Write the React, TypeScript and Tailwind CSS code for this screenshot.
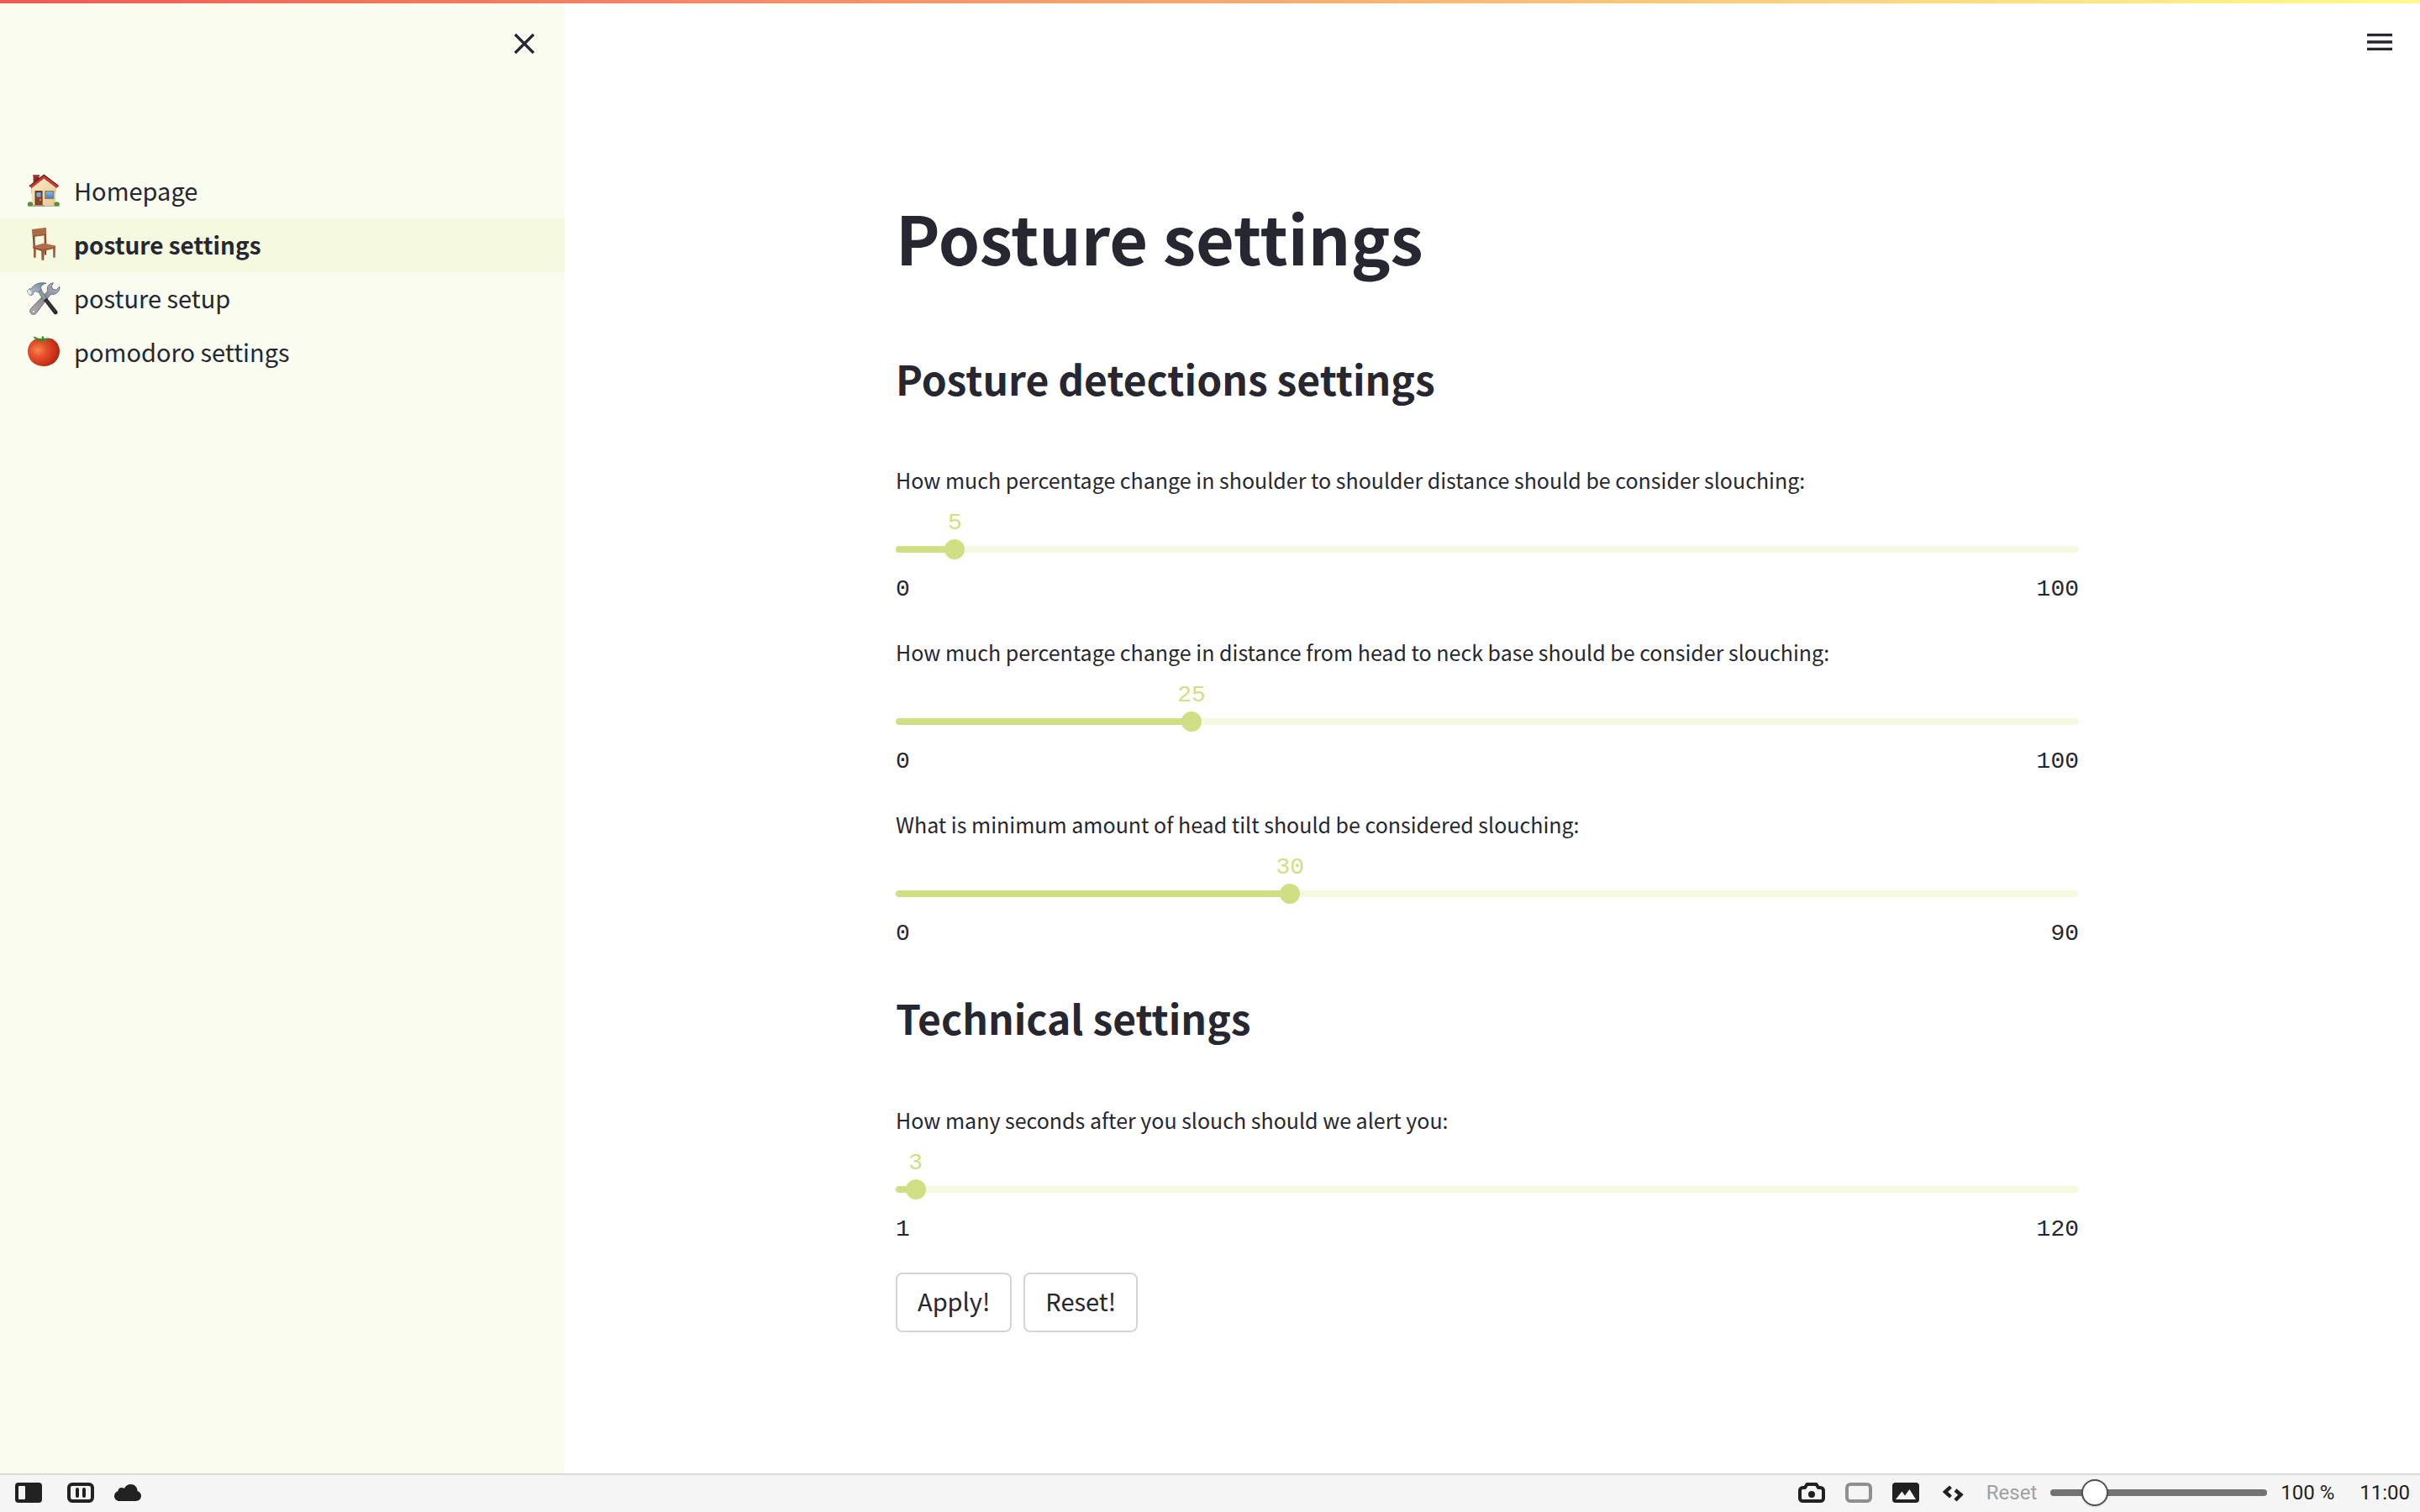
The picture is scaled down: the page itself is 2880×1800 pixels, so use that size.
import { useId, useState, type ReactNode } from "react";

function HouseIcon() {
  return (
    <svg viewBox="0 0 40 40" className="size-10 shrink-0" aria-hidden="true">
      <defs>
        <linearGradient id="wall" x1="0" y1="0" x2="1" y2="1">
          <stop offset="0" stopColor="#fbecc6" />
          <stop offset="1" stopColor="#e3c99a" />
        </linearGradient>
        <linearGradient id="pane" x1="0" y1="0" x2="0" y2="1">
          <stop offset="0" stopColor="#7fb9ee" />
          <stop offset="1" stopColor="#3f86c9" />
        </linearGradient>
      </defs>
      <path d="M7.6 1.4h7V9l-7 6z" fill="#8e2f29" />
      <path d="M7.2 1h7.8v1.8H7.2z" fill="#b2443a" />
      <path d="M5.7 15 20.3 3 34 15v23.6H5.7z" fill="url(#wall)" />
      <path d="M5.7 15v8M34 15v8" stroke="#c9ad7c" strokeWidth="0.8" />
      <path d="M20.3 1.2 37.8 14.4l-1.9 2.4L20.3 5 5 16.8l-2.2-2.2z" fill="#d9332e" />
      <path d="M2.8 14.6 20.3 1.2l17.5 13.2" fill="none" stroke="#3b2222" strokeWidth="1.1" />
      <path d="M5 17 20.3 5.2 35.9 17" fill="none" stroke="#8d1d1a" strokeWidth="0.7" />
      <rect x="9.6" y="20" width="9" height="17.4" fill="#6d3420" />
      <rect x="10.8" y="21.4" width="6.6" height="15.6" fill="#8a4529" />
      <rect x="11.6" y="22.2" width="5" height="5.2" fill="#62b2f2" />
      <circle cx="16" cy="31" r="0.9" fill="#e7b54a" />
      <rect x="21.2" y="20" width="11" height="10" fill="#a1754c" />
      <rect x="22.6" y="21.2" width="8.2" height="7.4" fill="url(#pane)" />
      <path d="M7.6 37.2h13.2v1.6H7.6z" fill="#9a948c" />
      <ellipse cx="4" cy="36" rx="3.2" ry="2.8" fill="#5b8f33" />
      <ellipse cx="35.6" cy="36" rx="3.2" ry="2.8" fill="#5b8f33" />
      <path d="M1 38.2h38v.8H1z" fill="#a9a693" />
    </svg>
  );
}

function ChairIcon() {
  return (
    <svg viewBox="0 0 40 40" className="size-10 shrink-0" aria-hidden="true">
      <path d="M20.8 22h2.6l-.4 10.4h-2.2z" fill="#7f452c" />
      <path d="M6.2 2.2 9 2l1 21H7.6z" fill="#8f4d31" />
      <path d="M20.2.6 22.6.2l.8 19.6h-2.6z" fill="#8f4d31" />
      <path d="M6.2 2.1 22.6.1l.4 8.4L7 10.6z" fill="#a96642" />
      <path d="M7.4 4.4 22.4 2.4M7.6 7.4l15-2" stroke="#b9764f" strokeWidth="0.8" />
      <path d="M7 10.6l16-2.1" stroke="#7a4026" strokeWidth="0.8" />
      <path d="M8 24h2.8l-.2 11.7H8z" fill="#a25d3b" />
      <path d="M17 25.6h3.3l-.2 13.2h-2.6z" fill="#a7613e" />
      <path d="M19.2 25.6h1.1l-.2 13.2h-.9z" fill="#7a4026" />
      <path d="M31 22.4h3l-.3 13.3h-2.4z" fill="#a25d3b" />
      <path d="M7 22.2 20 18.4l14.2 3.2-15.8 3.8z" fill="#b36f49" />
      <path d="M7 22.2l11.4 3.2v2.8L7.4 24.8z" fill="#95522f" />
      <path d="M18.4 25.4l15.8-3.8-.2 2.9-15.6 3.7z" fill="#a25d3b" />
    </svg>
  );
}

function ToolsIcon() {
  return (
    <svg viewBox="0 0 40 40" className="size-10 shrink-0" aria-hidden="true">
      <defs>
        <linearGradient id="steel" x1="0" y1="1" x2="1" y2="0">
          <stop offset="0" stopColor="#b9aeb2" />
          <stop offset="0.5" stopColor="#8d8690" />
          <stop offset="1" stopColor="#a8bccb" />
        </linearGradient>
        <linearGradient id="head" x1="0" y1="1" x2="1" y2="0">
          <stop offset="0" stopColor="#c5d2de" />
          <stop offset="1" stopColor="#6d7f90" />
        </linearGradient>
      </defs>
      <path
        d="M31.6 1.8c-4.4.2-7.6 3.600-7.300 7.700.1 1.300.3 2-.5 3.100L4.600 32.400c-1.700 2.300-.9 5.300 1.300 6.500 2 1 4.200.4 5.500-1.400L27.300 16.600c.9-1.100 1.800-1.300 3.300-1.200 5.200 0 9-4.500 8.300-9.200L35 10.200l-4.500-.9-1.200-4z"
        fill="url(#steel)"
        stroke="#5f6470"
        strokeWidth="0.9"
      />
      <circle cx="7.800" cy="35.800" r="1.700" fill="#fbfdf3" stroke="#5f6470" strokeWidth="0.6" />
      <path d="M13.200 11.600l3.700-2.200 7.400 12.200-3.600 2.500z" fill="#8b98a6" stroke="#586170" strokeWidth="0.7" />
      <path d="M20 22.400l3.800-2.600 12.400 15.600c1.700 2.700-1.700 5.200-4 3z" fill="#26282c" />
      <path d="M23 22.400l10.800 13.800" stroke="#4c5057" strokeWidth="1" />
      <path
        d="M.4 11.200l2.800-2.600 1.800.6C8.300 3.200 14.600.6 23 2.200c-3.600.8-5.800 2.800-6.600 5.400l1 2.200-4.600 3.300-2.200-1.600-3.400 1.600.2 2.200-2.600 1.500c-2-.7-4-3.100-4.400-5.600z"
        fill="url(#head)"
        stroke="#566474"
        strokeWidth="0.8"
      />
      <ellipse cx="3" cy="12.600" rx="1.900" ry="2.800" transform="rotate(-28 3 12.600)" fill="#e3edf5" />
    </svg>
  );
}

function TomatoIcon() {
  return (
    <svg viewBox="0 0 40 40" className="size-10 shrink-0" aria-hidden="true">
      <defs>
        <radialGradient id="skin" cx="0.32" cy="0.42" r="0.75">
          <stop offset="0" stopColor="#f58a4e" />
          <stop offset="0.35" stopColor="#e4502a" />
          <stop offset="0.75" stopColor="#c92f18" />
          <stop offset="1" stopColor="#94200f" />
        </radialGradient>
      </defs>
      <path
        d="M20 4.600c4-1.600 9-1.400 12.600 1.400 4 3 6.400 7.800 6.400 13 0 9.800-8 18-19 18S1 29.400 1 19.600c0-6 2.600-10.600 6.800-13.600C11.400 3.400 16 3.200 20 4.600z"
        fill="url(#skin)"
      />
      <path
        d="M7.600 1.600c2.600.4 5.400 1.600 7.600 3.400 1-.8 2.200-1.200 3-1.200l-.8-2.200 2.200-.4 1 2.800c3-.6 6.600-.5 9.400.6-2.600.3-4.600.6-6.800 1.200l2.400 1.800c-2 0-3.600-.4-5-1l-1.600 2.200-1.800-2.200c-1.800.7-4 1-6.200 1l2-2.200C10 5.400 8.400 3.800 7.600 1.600z"
        fill="#3f8a2a"
      />
    </svg>
  );
}

const pages: { label: string; icon: ReactNode; active?: boolean }[] = [
  { label: "Homepage", icon: <HouseIcon /> },
  { label: "posture settings", icon: <ChairIcon />, active: true },
  { label: "posture setup", icon: <ToolsIcon /> },
  { label: "pomodoro settings", icon: <TomatoIcon /> },
];

function Sidebar() {
  return (
    <aside className="w-[672px] shrink-0 bg-[#fafcf0]">
      <div className="flex h-[196px] justify-end pt-8 pr-7">
        <button type="button" aria-label="Close sidebar" className="size-10">
          <svg viewBox="0 0 40 40" className="size-10" stroke="#262730" strokeWidth="3.200">
            <path d="M9 9l22 22M31 9L9 31" />
          </svg>
        </button>
      </div>
      <nav>
        {pages.map((page) => (
          <a
            key={page.label}
            href="#"
            className={
              page.active
                ? "flex h-16 items-center gap-4 bg-[#f5f9df] px-8 pb-[3px] text-[28px] font-bold"
                : "flex h-16 items-center gap-4 px-8 pb-[3px] text-[29px]"
            }
          >
            {page.icon}
            {page.label}
          </a>
        ))}
      </nav>
    </aside>
  );
}

function SettingSlider({ label, min, max, initial }: { label: string; min: number; max: number; initial: number }) {
  const id = useId();
  const [value, setValue] = useState(initial);
  const percent = `${((value - min) / (max - min)) * 100}%`;
  return (
    <div>
      <label htmlFor={id} className="block text-[25px] leading-10">
        {label}
      </label>
      <div className="relative mt-[51px] h-6">
        <div className="absolute inset-x-0 top-2 h-2 overflow-hidden rounded-full bg-[#f5f9df]">
          <div className="h-full bg-[#d0df83]" style={{ width: percent }} />
        </div>
        <output
          htmlFor={id}
          className="absolute bottom-[27px] -translate-x-1/2 font-['Liberation_Mono',monospace] text-[28px] leading-8 text-[#d0df83]"
          style={{ left: percent }}
        >
          {value}
        </output>
        <input
          id={id}
          type="range"
          min={min}
          max={max}
          value={value}
          onChange={(e) => setValue(Number(e.target.value))}
          className="absolute inset-y-0 -left-3 h-6 w-[calc(100%+24px)] appearance-none bg-transparent [&::-webkit-slider-thumb]:size-6 [&::-webkit-slider-thumb]:appearance-none [&::-webkit-slider-thumb]:rounded-full [&::-webkit-slider-thumb]:bg-[#d0df83]"
        />
      </div>
      <div className="mt-5 flex justify-between font-['Liberation_Mono',monospace] text-[28px] leading-8">
        <span>{min}</span>
        <span>{max}</span>
      </div>
    </div>
  );
}

function ActionButton({ children }: { children: ReactNode }) {
  return (
    <button
      type="button"
      className="h-[71px] rounded-lg border-2 border-[#d4d4d6] bg-white px-6 pb-1 text-[29px]"
    >
      {children}
    </button>
  );
}

function MainPanel() {
  return (
    <main className="min-w-0 flex-1 overflow-hidden bg-white">
      <header className="flex h-[229px] justify-end pt-[30px] pr-7">
        <button type="button" aria-label="Main menu" className="size-10">
          <svg viewBox="0 0 24 24" className="size-10" fill="#262730">
            <path d="M3 18h18v-2H3v2zm0-5h18v-2H3v2zm0-7v2h18V6H3z" />
          </svg>
        </button>
      </header>
      <div className="pr-3">
        <div className="mx-auto max-w-[1408px]">
          <h1 className="text-[79px] leading-[106px] font-bold">Posture settings</h1>
          <h2 className="mt-[83px] text-5xl leading-16 font-bold">Posture detections settings</h2>
          <div className="mt-[69px] flex flex-col gap-[38px]">
            <SettingSlider
              label="How much percentage change in shoulder to shoulder distance should be consider slouching:"
              min={0}
              max={100}
              initial={5}
            />
            <SettingSlider
              label="How much percentage change in distance from head to neck base should be consider slouching:"
              min={0}
              max={100}
              initial={25}
            />
            <SettingSlider
              label="What is minimum amount of head tilt should be considered slouching:"
              min={0}
              max={90}
              initial={30}
            />
          </div>
          <h2 className="mt-[51px] mb-[70px] text-5xl leading-16 font-bold">Technical settings</h2>
          <SettingSlider label="How many seconds after you slouch should we alert you:" min={1} max={120} initial={3} />
          <div className="mt-[35px] flex gap-[14px]">
            <ActionButton>Apply!</ActionButton>
            <ActionButton>Reset!</ActionButton>
          </div>
        </div>
      </div>
    </main>
  );
}

function BarButton({ label, children }: { label: string; children: ReactNode }) {
  return (
    <button type="button" aria-label={label} className="h-6 w-8">
      <svg viewBox="0 0 32 24" className="h-6 w-8" fill="none">
        {children}
      </svg>
    </button>
  );
}

function StatusBar() {
  const [zoom, setZoom] = useState(20);
  return (
    <footer className="flex h-[46px] shrink-0 items-center justify-between border-t-2 border-[#dadada] bg-[#f5f5f5] pr-3 pb-0.5 pl-[18px] font-['Roboto',sans-serif] text-2xl leading-8 text-[#212121]">
      <div className="flex items-center">
        <BarButton label="Toggle panel">
          <rect width="32" height="24" rx="4" fill="#212121" />
          <rect x="4" y="4" width="8" height="16" rx="1" fill="#f5f5f5" />
        </BarButton>
        <div className="ml-[30px] flex gap-6">
          <BarButton label="Tile pages">
            <rect x="2" y="2" width="28" height="20" rx="4" stroke="#212121" strokeWidth="4" />
            <path d="M12 8v8M20 8v8" stroke="#212121" strokeWidth="4" strokeLinecap="round" />
          </BarButton>
          <BarButton label="Sync">
            <path
              d="M6.500 22C2.600 22 0 19.300 0 16c0-2.900 2-5.100 4.400-5.700C4.500 7.400 6.400 6 8.800 6c1.300 0 2.200.3 3.200.9C13.400 3.900 16.400 2 19.600 2c4.500 0 7.900 3.500 8 8 2.500.8 4.400 3.100 4.400 5.800 0 3.500-2.700 6.200-6.500 6.200z"
              fill="#212121"
            />
          </BarButton>
        </div>
      </div>
      <div className="flex items-center">
        <div className="flex items-center gap-6">
          <BarButton label="Capture page">
            <path
              d="M2 9.500C2 7.500 3.500 6 5.500 6H8l2.500-4h11L24 6h2.500C28.500 6 30 7.500 30 9.500v9c0 2-1.500 3.500-3.500 3.500h-21C3.500 22 2 20.500 2 18.500z"
              stroke="#212121"
              strokeWidth="4"
              strokeLinejoin="round"
            />
            <circle cx="16" cy="14" r="4" fill="#212121" />
          </BarButton>
          <BarButton label="Page tiling">
            <rect x="2" y="2" width="28" height="20" rx="4" stroke="#8f8f8f" strokeWidth="4" />
          </BarButton>
          <BarButton label="Toggle images">
            <rect width="32" height="24" rx="4" fill="#212121" />
            <path d="M4 20l7.500-9.500 3.500 5L20.500 8 28 20z" fill="#f5f5f5" />
          </BarButton>
          <BarButton label="Page actions">
            <path d="M13.500 5L7 11l6.500 6M19 9l6.500 5.500L19 21" stroke="#212121" strokeWidth="4.400" />
          </BarButton>
        </div>
        <button type="button" className="ml-6 text-[#a0a0a0]">
          Reset
        </button>
        <div className="relative ml-4 h-8 w-[258px]">
          <div className="absolute inset-x-0 top-3 h-2 rounded-full bg-[#737373]" />
          <input
            type="range"
            aria-label="Page zoom"
            min={0}
            max={100}
            value={zoom}
            onChange={(e) => setZoom(Number(e.target.value))}
            className="absolute inset-x-0 -left-2 h-8 w-[258px] appearance-none bg-transparent [&::-webkit-slider-thumb]:size-8 [&::-webkit-slider-thumb]:appearance-none [&::-webkit-slider-thumb]:rounded-full [&::-webkit-slider-thumb]:border-2 [&::-webkit-slider-thumb]:border-[#4f4f4f] [&::-webkit-slider-thumb]:bg-white [&::-webkit-slider-thumb]:shadow"
          />
        </div>
        <output className="ml-4">100 %</output>
        <time className="ml-[30px]">11:00</time>
      </div>
    </footer>
  );
}

export default function App() {
  return (
    <div className="relative flex h-screen flex-col bg-white font-['Noto_Sans_CJK_SC',sans-serif] text-[#262730]">
      <div className="flex min-h-0 flex-1">
        <Sidebar />
        <MainPanel />
      </div>
      <StatusBar />
      <div className="absolute inset-x-0 top-0 h-1 bg-linear-to-r from-[#ed5a53] via-[#f6a870] to-[#fffb8c]" />
    </div>
  );
}
